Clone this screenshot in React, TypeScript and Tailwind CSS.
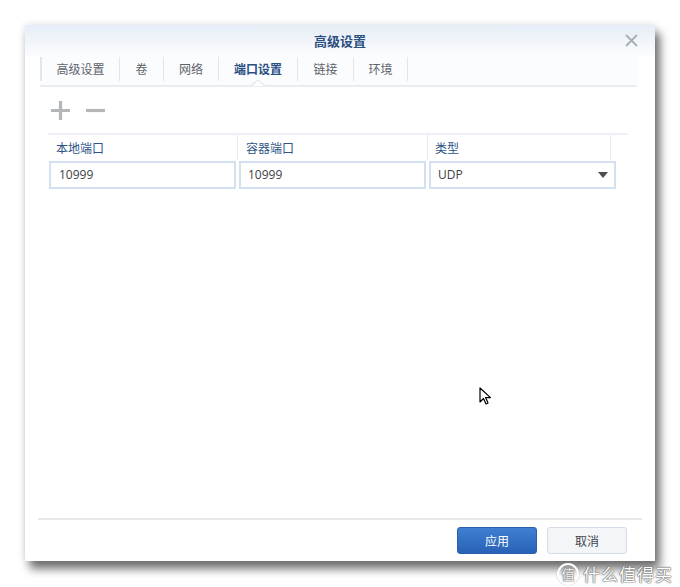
import React from 'react';

const tabs = [
  { label: '高级设置', w: 'w-[79px]' },
  { label: '卷', w: 'w-[44px]' },
  { label: '网络', w: 'w-[55px]' },
  { label: '端口设置', w: 'w-[79px]', active: true },
  { label: '链接', w: 'w-[56px]' },
  { label: '环境', w: 'w-[55px]' },
];

const font = { fontFamily: '"Noto Sans CJK SC", "Noto Sans", sans-serif' };

export default function App() {
  return (
    <div className="relative w-[680px] h-[587px] bg-white overflow-hidden" style={font}>
      {/* Dialog */}
      <div className="ml-[25px] mt-[25px] w-[630px] h-[536px] bg-white flex flex-col shadow-[5px_8px_9px_rgba(0,0,0,0.55),0_0_8px_rgba(0,0,0,0.12)]">
        {/* Title bar */}
        <div className="relative h-[31px] bg-gradient-to-b from-[#e6edf6] to-[#fbfcfe] flex items-center justify-center">
          <span className="text-[13px] font-bold text-[#2c4f82] mt-[1px]">高级设置</span>
          <svg className="absolute right-[17px] top-[9px]" width="13" height="13" viewBox="0 0 13 13">
            <path d="M1 1 L12 12 M12 1 L1 12" stroke="#a9aeb4" strokeWidth="1.8" />
          </svg>
        </div>

        {/* Tabs */}
        <div className="relative ml-[15px] mr-[18px] h-[31px] flex items-start border-b-2 border-[#e9edf1] bg-[#fbfcfe]">
          {tabs.map((t, i) => (
            <div
              key={t.label}
              className={`${t.w} h-[24px] mt-[1px] flex items-center justify-center ${i === 0 ? 'border-l-2' : 'border-l'} border-[#dfe6ee] ${i === tabs.length - 1 ? 'border-r' : ''}`}
            >
              <span className={`text-[12px] ${t.active ? 'font-bold text-[#2a4f82]' : 'text-[#5d636a]'}`}>{t.label}</span>
            </div>
          ))}
          {/* active tab notch */}
          <svg className="absolute left-[211px] bottom-[-2px]" width="14" height="8" viewBox="0 0 14 8">
            <path d="M0 7 L7 1 L14 7" fill="white" stroke="#e3e7ec" strokeWidth="1.3" />
          </svg>
        </div>

        {/* Toolbar */}
        <div className="h-[46px] flex items-center gap-[14px] pl-[25px]">
          <svg width="21" height="21" viewBox="0 0 21 21">
            <path d="M10.5 1 V20 M1 10.5 H20" stroke="#b4b7ba" strokeWidth="3.2" />
          </svg>
          <svg width="21" height="21" viewBox="0 0 21 21">
            <path d="M1 10.5 H20" stroke="#b4b7ba" strokeWidth="3.2" />
          </svg>
        </div>

        {/* Table */}
        <div className="ml-[23px] w-[580px]">
          <div className="h-[27px] flex border-t-2 border-[#edf1f5]">
            <div className="w-[190px] flex items-center pl-[8px] border-r border-[#e6ebf1]">
              <span className="text-[12px] text-[#2f5488]">本地端口</span>
            </div>
            <div className="w-[190px] flex items-center pl-[8px] border-r border-[#e6ebf1]">
              <span className="text-[12px] text-[#2f5488]">容器端口</span>
            </div>
            <div className="w-[183px] flex items-center pl-[7px] border-r border-[#e6ebf1]">
              <span className="text-[12px] text-[#2f5488]">类型</span>
            </div>
            <div className="flex-1" />
          </div>
          <div className="h-[30px] flex items-center gap-[3px] pl-[1px]">
            <div className="w-[187px] h-[28px] border-2 border-[#d3e0ef] flex items-center pl-[8px]">
              <span className="text-[12px] text-[#3b3f44]" style={{ fontFamily: '"Open Sans", sans-serif' }}>10999</span>
            </div>
            <div className="w-[187px] h-[28px] border-2 border-[#d3e0ef] flex items-center pl-[7px]">
              <span className="text-[12px] text-[#3b3f44]" style={{ fontFamily: '"Open Sans", sans-serif' }}>10999</span>
            </div>
            <div className="w-[187px] h-[28px] border-2 border-[#d3e0ef] flex items-center justify-between pl-[7px] pr-[6px]">
              <span className="text-[12px] text-[#3b3f44]" style={{ fontFamily: '"Open Sans", sans-serif' }}>UDP</span>
              <svg width="10" height="6" viewBox="0 0 10 6">
                <path d="M0 0 H10 L5 6 Z" fill="#4a4e53" />
              </svg>
            </div>
          </div>
        </div>

        <div className="flex-1" />

        {/* Footer */}
        <div className="mx-[13px] h-[2px] bg-[#e8e9ea]" />
        <div className="h-[41px] flex items-center justify-end gap-[10px] pr-[28px]">
          <button className="w-[80px] h-[27px] rounded-[3px] bg-gradient-to-b from-[#3f7fd2] to-[#2862b6] border border-[#2a5fae] text-white text-[12px]">
            应用
          </button>
          <button className="w-[80px] h-[27px] rounded-[3px] bg-[#f3f6f9] border border-[#d5dde6] text-[#3f444a] text-[12px]">
            取消
          </button>
        </div>
      </div>

      {/* Mouse cursor */}
      <svg className="absolute left-[479px] top-[387px]" width="13" height="19" viewBox="0 0 13 19">
        <path d="M1 1 V15 L4.5 11.5 L7 17 L9 16 L6.6 10.6 L11.5 10.6 Z" fill="white" stroke="black" strokeWidth="1.2" strokeLinejoin="round" />
      </svg>

      {/* Watermark */}
      <div className="absolute left-[557px] top-[561px] flex items-center gap-[4px] text-white [text-shadow:0_0_1px_#555,0_0_1px_#555,0_0_2px_#888]">
        <div className="w-[22px] h-[22px] rounded-full border-2 border-white flex items-center justify-center shadow-[0_0_1px_#666]">
          <span className="text-[13px]">值</span>
        </div>
        <span className="text-[17px] tracking-[1px]">什么值得买</span>
      </div>
    </div>
  );
}
